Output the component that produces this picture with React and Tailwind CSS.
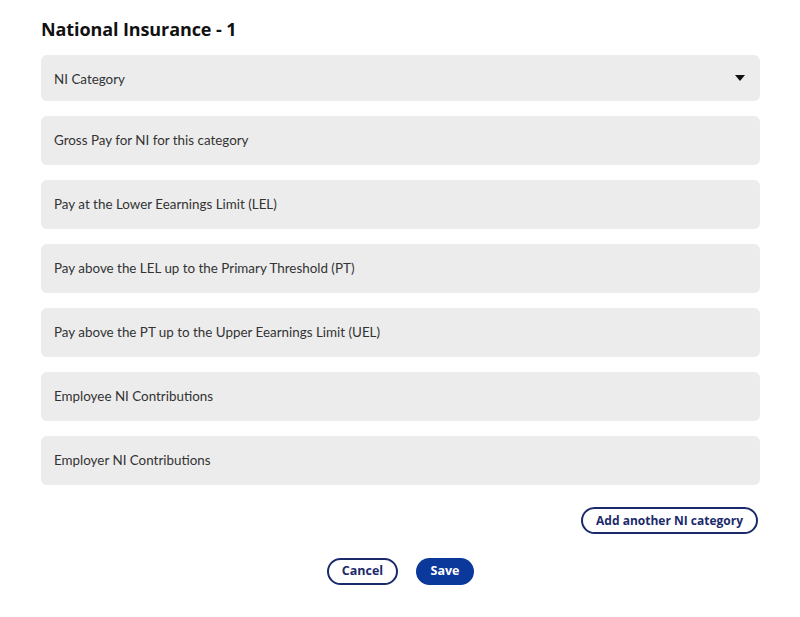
import React from "react";

const fields = [
  "Gross Pay for NI for this category",
  "Pay at the Lower Eearnings Limit (LEL)",
  "Pay above the LEL up to the Primary Threshold (PT)",
  "Pay above the PT up to the Upper Eearnings Limit (UEL)",
  "Employee NI Contributions",
  "Employer NI Contributions",
];

export default function App() {
  return (
    <div className="min-h-screen bg-white px-[41px] pt-[17px] pb-8 font-['Lato',sans-serif]">
      <h1 className="text-[18px] font-bold leading-6 text-[#111] font-['Open_Sans',sans-serif] tracking-[-0.1px]">
        National Insurance - 1
      </h1>

      <div className="mt-[14px] w-[719px] flex flex-col gap-[15px]">
        {/* NI Category select */}
        <div className="h-[46px] rounded-md bg-[#ececec] flex items-center justify-between pl-[13px] pr-[15px]">
          <span className="text-[13.4px] text-[#333] pt-[2px]">NI Category</span>
          <svg width="10" height="6" viewBox="0 0 10 6">
            <path d="M0 0 L10 0 L5 6 Z" fill="#111" />
          </svg>
        </div>

        {fields.map((label) => (
          <div
            key={label}
            className="h-[49px] rounded-md bg-[#ececec] flex items-center pl-[13px]"
          >
            <span className="text-[13.4px] text-[#333]">{label}</span>
          </div>
        ))}
      </div>

      <div className="w-[719px] flex justify-end mt-[22px]">
        <button className="h-[27px] px-[13px] mr-[2px] rounded-full border-2 border-[#1b2a6b] text-[#1b2a6b] text-[12px] font-bold font-['Open_Sans',sans-serif]">
          Add another NI category
        </button>
      </div>

      <div className="w-[719px] flex justify-center gap-[18px] mt-[24px]">
        <button className="h-[27px] w-[71px] rounded-full border-2 border-[#1b2a6b] text-[#1b2a6b] text-[12.5px] font-bold font-['Open_Sans',sans-serif]">
          Cancel
        </button>
        <button className="h-[27px] w-[58px] rounded-full bg-[#0b389b] text-white text-[12.5px] font-bold font-['Open_Sans',sans-serif]">
          Save
        </button>
      </div>
    </div>
  );
}
